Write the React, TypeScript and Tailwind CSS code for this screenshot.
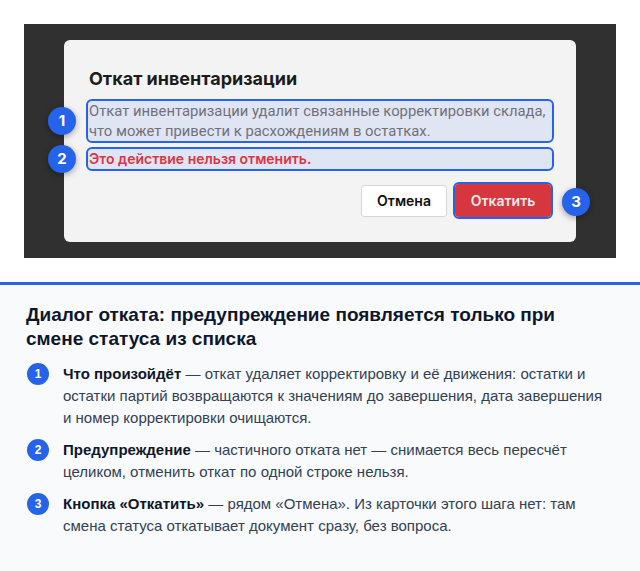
const steps = [
  {
    n: 1,
    title: "Что произойдёт",
    text: " — откат удаляет корректировку и её движения: остатки и остатки партий возвращаются к значениям до завершения, дата завершения и номер корректировки очищаются.",
  },
  {
    n: 2,
    title: "Предупреждение",
    text: " — частичного отката нет — снимается весь пересчёт целиком, отменить откат по одной строке нельзя.",
  },
  {
    n: 3,
    title: "Кнопка «Откатить»",
    text: " — рядом «Отмена». Из карточки этого шага нет: там смена статуса откатывает документ сразу, без вопроса.",
  },
];

function Marker({ n, className }: { n: number; className: string }) {
  return (
    <div
      className={`absolute flex h-7 w-7 items-center justify-center rounded-full bg-[#2563eb] text-[15px] font-bold text-white shadow-[0_2px_6px_rgba(0,0,0,0.35)] ${className}`}
    >
      {n}
    </div>
  );
}

function RollbackDialog() {
  return (
    <div className="relative h-[202px] w-[512px] rounded-[6px] bg-[#f3f3f3] px-[22px] pt-[27px] font-['Inter',sans-serif]">
      <h2 className="pl-[3px] text-[18px] leading-6 font-bold text-[#1c1c1c]">
        Откат инвентаризации
      </h2>
      <div className="mt-2 rounded-[6px] border-2 border-[#2563eb] bg-[#dfe5f3] pl-[1px] font-['Roboto',sans-serif] text-[14.8px] leading-5 text-[#71717a]">
        Откат инвентаризации удалит связанные корректировки склада, что может привести к расхождениям в остатках.
      </div>
      <div className="mt-1 rounded-[6px] border-2 border-[#2563eb] bg-[#dfe5f3] pl-[1px] text-[14px] leading-5 font-semibold text-[#dc3545]">
        Это действие нельзя отменить.
      </div>
      <div className="mt-[11px] flex items-center justify-end gap-[6px] pr-[1px]">
        <button className="h-8 w-[86px] rounded-[3px] border border-[#d6d6d6] bg-white text-[14px] font-semibold text-[#111]">
          Отмена
        </button>
        <div className="rounded-[6px] border-2 border-[#2563eb]">
          <button className="h-[33px] w-[96px] rounded-[4px] bg-[#d6373f] text-[14px] font-semibold text-[#f6e9e9]">
            Откатить
          </button>
        </div>
      </div>

      <Marker n={1} className="left-[-16px] top-[67px]" />
      <Marker n={2} className="left-[-16px] top-[105px]" />
      <Marker n={3} className="left-[498px] top-[148px]" />
    </div>
  );
}

export default function App() {
  return (
    <div className="h-[571px] w-[640px] overflow-hidden bg-white">
      <div className="p-6">
        <div className="flex h-[234px] justify-center bg-[#303030] pt-4">
          <RollbackDialog />
        </div>
      </div>

      <div className="h-[3px] bg-[#2563eb]" />

      <section className="h-[286px] bg-[#f8fafc] px-[26px] pt-[18px] font-['Liberation_Sans',Arial,sans-serif]">
        <h1 className="text-[19px] leading-6 font-bold text-[#0f172a]">
          Диалог отката: предупреждение появляется только при смене статуса из списка
        </h1>
        <ol className="mt-3 flex flex-col gap-[10px]">
          {steps.map((s) => (
            <li key={s.n} className="flex gap-[14px] pl-[1px]">
              <span className="flex h-[22px] w-[22px] shrink-0 items-center justify-center rounded-full bg-[#2563eb] text-[12px] font-bold text-white">
                {s.n}
              </span>
              <p className="text-[15px] leading-[22px] text-[#334155]">
                <b className="font-bold text-[#0f172a]">{s.title}</b>
                {s.text}
              </p>
            </li>
          ))}
        </ol>
      </section>
    </div>
  );
}
